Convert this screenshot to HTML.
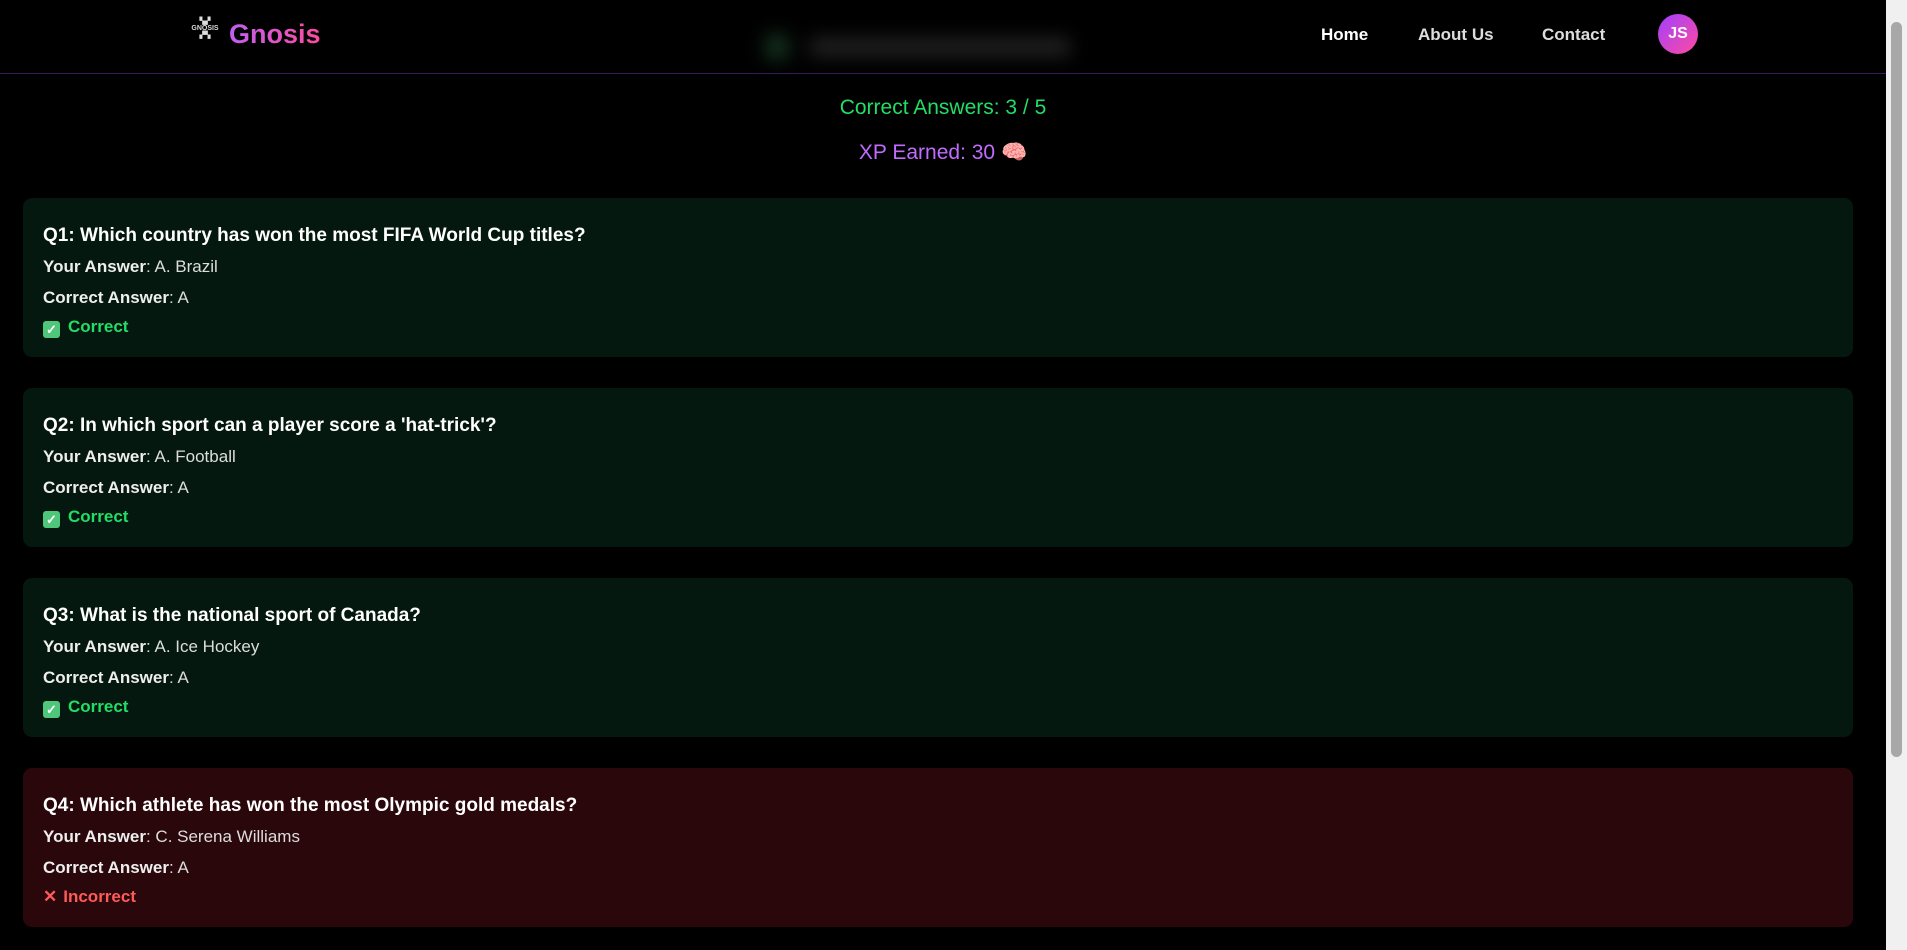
<!DOCTYPE html>
<html><head><meta charset="utf-8"><style>
*{box-sizing:border-box;margin:0;padding:0}
html,body{width:1907px;height:950px;overflow:hidden;background:#000;font-family:"Liberation Sans",sans-serif;color:#fff}
.hdr{position:absolute;left:0;top:0;width:1886px;height:74px;border-bottom:1px solid #3a1a5a}
.logo{position:absolute;left:191px;top:18px;width:28px;height:30px;font-size:7px;line-height:7px;color:#ddd;text-align:center;font-weight:bold}
.brand{position:absolute;left:229px;top:19px;font-size:27px;font-weight:bold;background:linear-gradient(90deg,#c060f0,#ff4aa0);-webkit-background-clip:text;color:transparent}
.nav{position:absolute;top:25px;font-size:17px;font-weight:bold;color:#ddd}
.av{position:absolute;left:1658px;top:14px;width:40px;height:40px;border-radius:50%;background:linear-gradient(135deg,#a040ff,#ff4aa0);font-size:16px;font-weight:bold;text-align:center;line-height:40px}
.blur{position:absolute;left:760px;top:28px;width:360px;height:36px;filter:blur(9px)}
.sum{position:absolute;left:0;width:1886px;text-align:center;font-size:21px}
.card{position:absolute;left:23px;width:1830px;height:159px;border-radius:9px;padding:0 20px}
.g{background:#04180f}.r{background:#2a070b}
.card h3{position:absolute;top:27px;left:20px;font-size:19px;font-weight:bold}
.l{position:absolute;left:20px;font-size:17px;color:#ddd}
.l b{color:#eee}
.ok{color:#22dd66;font-weight:bold}.bad{color:#ff5a5a;font-weight:bold}
.box{display:inline-block;width:17px;height:17px;background:#4fc77a;border-radius:3px;color:#fff;font-size:13px;text-align:center;line-height:17px;vertical-align:-2px;margin-right:8px}
.sb{position:absolute;left:1886px;top:0;width:21px;height:950px;background:#f0f0f0}
.sb div{position:absolute;left:5px;top:22px;width:11px;height:735px;background:#a8a8a8;border-radius:6px}
</style></head><body>
<div class="hdr">
<div class="logo">▚▞<br>GNOSIS<br>▞▚</div>
<div class="brand">Gnosis</div>
<div class="blur"><div style="position:absolute;left:5px;top:6px;width:24px;height:26px;background:#14301f;border-radius:6px"></div><div style="position:absolute;left:50px;top:10px;width:260px;height:18px;background:#222"></div></div>
<div class="nav" style="left:1321px;color:#fff">Home</div>
<div class="nav" style="left:1418px">About Us</div>
<div class="nav" style="left:1542px">Contact</div>
<div class="av">JS</div>
</div>
<div class="sum" style="top:96px;color:#22dd66">Correct Answers: 3 / 5</div>
<div class="sum" style="top:141px;color:#c06cff">XP Earned: 30 <span style="color:#ff80b0">🧠</span></div>

<div class="card g" style="top:198px"><h3>Q1: Which country has won the most FIFA World Cup titles?</h3>
<div class="l" style="top:59px"><b>Your Answer</b>: A. Brazil</div>
<div class="l" style="top:90px"><b>Correct Answer</b>: A</div>
<div class="l ok" style="top:119px"><span class="box">✓</span>Correct</div></div>

<div class="card g" style="top:388px"><h3>Q2: In which sport can a player score a 'hat-trick'?</h3>
<div class="l" style="top:59px"><b>Your Answer</b>: A. Football</div>
<div class="l" style="top:90px"><b>Correct Answer</b>: A</div>
<div class="l ok" style="top:119px"><span class="box">✓</span>Correct</div></div>

<div class="card g" style="top:578px"><h3>Q3: What is the national sport of Canada?</h3>
<div class="l" style="top:59px"><b>Your Answer</b>: A. Ice Hockey</div>
<div class="l" style="top:90px"><b>Correct Answer</b>: A</div>
<div class="l ok" style="top:119px"><span class="box">✓</span>Correct</div></div>

<div class="card r" style="top:768px"><h3>Q4: Which athlete has won the most Olympic gold medals?</h3>
<div class="l" style="top:59px"><b>Your Answer</b>: C. Serena Williams</div>
<div class="l" style="top:90px"><b>Correct Answer</b>: A</div>
<div class="l bad" style="top:119px"><span style="color:#ff5a5a;margin-right:6px">✕</span>Incorrect</div></div>

<div class="sb"><div></div></div>
</body></html>
